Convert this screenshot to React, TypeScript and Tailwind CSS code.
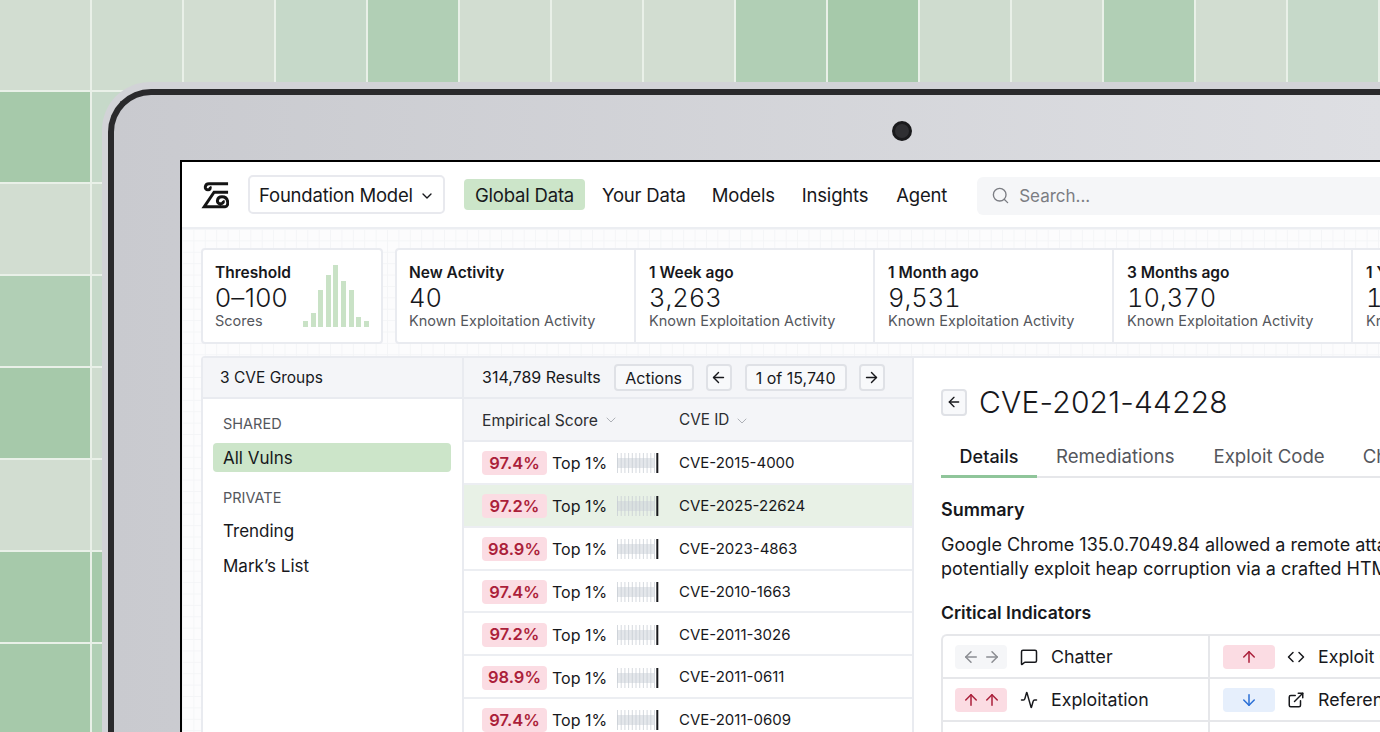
import React from 'react';
import { ArrowDown, ArrowLeft, ArrowRight, ArrowUp, Activity, ChevronDown, Code, ExternalLink, MessageSquare, Search } from 'lucide-react';

const L = 'bg-[#d2ddd1]';
const P = 'bg-[#cfdccf]';
const M = 'bg-[#c6d9c9]';
const G = 'bg-[#b1cfb5]';
const D = 'bg-[#a6c9aa]';

const tiles = [
  [L, P, L, M, G, L, L, L, G, D, P, L, G, L, M],
  [D, M, L, L, L, L, L, L, L, L, L, L, L, L, L],
  [L, P, L, L, L, L, L, L, L, L, L, L, L, L, L],
  [G, M, L, L, L, L, L, L, L, L, L, L, L, L, L],
  [D, P, L, L, L, L, L, L, L, L, L, L, L, L, L],
  [L, P, L, L, L, L, L, L, L, L, L, L, L, L, L],
  [D, D, L, L, L, L, L, L, L, L, L, L, L, L, L],
  [D, G, L, L, L, L, L, L, L, L, L, L, L, L, L],
];

const stats = [
  { title: 'New Activity', value: '40', cell: 'pl-[12px]' },
  { title: '1 Week ago', value: '3,263', cell: 'pl-[13px] border-l-2 border-[#e9ebf0]' },
  { title: '1 Month ago', value: '9,531', cell: 'pl-[13px] border-l-2 border-[#e9ebf0]' },
  { title: '3 Months ago', value: '10,370', cell: 'pl-[13px] border-l-2 border-[#e9ebf0]' },
  { title: '1 Year ago', value: '12,408', cell: 'pl-[13px] border-l-2 border-[#e9ebf0]' },
];

const rows = [
  { score: '97.4%', id: 'CVE-2015-4000' },
  { score: '97.2%', id: 'CVE-2025-22624', active: true },
  { score: '98.9%', id: 'CVE-2023-4863' },
  { score: '97.4%', id: 'CVE-2010-1663' },
  { score: '97.2%', id: 'CVE-2011-3026' },
  { score: '98.9%', id: 'CVE-2011-0611' },
  { score: '97.4%', id: 'CVE-2011-0609' },
];

const bars = [6, 14, 37, 52, 62, 46, 37, 10, 6];

const Logo = () => (
  <svg width="28" height="28" viewBox="0 0 30 30" fill="none" stroke="#141414" strokeWidth="3.200" className="shrink-0">
    <path d="M29 3H8.500C4 3 3 9.500 7.500 9.500c2.200 0 3-2 2-3.500" />
    <path d="M29 12H14L3.500 27.500H26c4 0 4-10.500-3.500-10.500-6 0-6.500 7.500-1.500 7.500 2.500 0 3.500-2 2.500-3.500" />
  </svg>
);

const Spark = () => (
  <svg width="42" height="20" viewBox="0 0 42 20" className="shrink-0">
    <rect x="0" y="5" width="37" height="10" fill="#cdd3da" opacity="0.55" />
    {[0, 3.7, 7.4, 11.1, 14.8, 18.5, 22.2, 25.9, 29.6, 33.3, 37].map((x) => (
      <rect key={x} x={x} y="0" width="1" height="20" fill="#c4cad2" opacity="0.7" />
    ))}
    <rect x="39.300" y="0" width="2" height="20" fill="#17181c" />
  </svg>
);

const SmallButton = ({ children }: { children: React.ReactNode }) => (
  <div className="h-[27px] w-[26px] flex items-center justify-center rounded border-2 border-[#dfe1e6] bg-[#f8f9fb] text-[#17181c]">
    {children}
  </div>
);

const Pill = ({ tone, children }: { tone: string; children: React.ReactNode }) => (
  <div className={`w-[52px] h-[24px] rounded flex items-center justify-center gap-[3px] ${tone}`}>{children}</div>
);

export default function App() {
  return (
    <div className="relative w-[1380px] h-[732px] overflow-hidden bg-[#e9f0e8] font-['Inter',sans-serif] text-[#17181c]">
      <div className="grid grid-cols-[repeat(15,90px)] auto-rows-[90px] gap-[2px]">
        {tiles.flat().map((c, i) => (
          <div key={i} className={c} />
        ))}
      </div>

      {/* Laptop */}
      <div className="absolute left-[102px] top-[82px] w-[1400px] h-[800px] rounded-tl-[48px] bg-[#d2d3d7] pl-[6px] pt-[7px]">
        <div className="relative w-full h-full rounded-tl-[43px] border-l-[6px] border-t-[6px] border-[#2a2a2c] bg-gradient-to-r from-[#c9cacf] to-[#e0e1e5] pl-[66px] pt-[65px]">
          <div className="absolute left-[778px] top-[26px] w-[20px] h-[20px] rounded-full bg-[#2f2f32] border-[3px] border-[#1a1a1c]" />

          {/* Screen */}
          <div className="w-[1300px] h-[700px] border-2 border-black bg-white">
            <header className="h-[67px] flex items-center pl-[19px] border-b-2 border-[#eceef2]">
              <Logo />
              <div className="ml-[19px] w-[197px] h-[39px] flex items-center gap-[6px] pl-[9px] pt-[2px] rounded-[5px] border-2 border-[#e8e9ee] text-[18.500px] tracking-[-0.2px]">
                Foundation Model
                <ChevronDown size={16} strokeWidth={2} />
              </div>
              <nav className="ml-[19px] flex items-center text-[18.500px] tracking-[-0.2px]">
                <span className="w-[121px] h-[31px] pt-[2px] flex items-center justify-center rounded bg-[#cce5c9]">Global Data</span>
                <span className="ml-[17px] pt-[2px]">Your Data</span>
                <span className="ml-[26px] pt-[2px]">Models</span>
                <span className="ml-[27px] pt-[2px]">Insights</span>
                <span className="ml-[28px] pt-[2px]">Agent</span>
              </nav>
              <div className="ml-[30px] mt-[2px] flex-1 h-[38px] flex items-center gap-[9px] pl-[14px] rounded-md bg-[#f5f6f8] text-[#7b7d83] text-[17px]">
                <Search size={19} strokeWidth={1.700} />
                <span className="pt-[2px]">Search...</span>
              </div>
            </header>

            <main className="h-[640px] pt-[19px] pl-[19px] bg-[#fcfcfd] bg-[linear-gradient(#f4f5f7_1px,transparent_1px),linear-gradient(90deg,#f4f5f7_1px,transparent_1px)] bg-[size:11.400px_11.400px]">
              {/* Stat cards */}
              <div className="flex gap-[12px]">
                <div className="w-[182px] h-[96px] shrink-0 flex justify-between rounded border-2 border-[#e9ebf0] bg-white pl-[12px] pr-[12px] pt-[13px]">
                  <div>
                    <div className="text-[15.500px] leading-[20px] font-semibold">Threshold</div>
                    <div className="text-[26px] leading-[30px] -mb-[1px] font-light tracking-[0.3px]">0–100</div>
                    <div className="text-[14.500px] leading-[18px] text-[#55575d]">Scores</div>
                  </div>
                  <div className="flex items-end gap-[2.600px] h-[66px] -mt-[2px] w-[66px]">
                    {bars.map((h, i) => (
                      <div key={i} className="w-[5px] bg-[#c9e2c6]" style={{ height: h }} />
                    ))}
                  </div>
                </div>
                <div className="flex h-[96px] rounded-l border-2 border-[#e9ebf0] bg-white">
                  {stats.map((s, i) => (
                    <div key={s.title} className={`${i ? 'w-[239px]' : 'w-[237px]'} shrink-0 pt-[13px] ${s.cell}`}>
                      <div className="text-[15.500px] leading-[20px] font-semibold">{s.title}</div>
                      <div className="text-[25.500px] leading-[30px] -mb-[1px] font-light tabular-nums">{s.value}</div>
                      <div className="text-[14.500px] leading-[18px] text-[#55575d]">Known Exploitation Activity</div>
                    </div>
                  ))}
                </div>
              </div>

              {/* Panels */}
              <div className="mt-[12px] h-[500px] flex rounded-tl border-2 border-[#e9ebf0] bg-white">
                <aside className="w-[261px] shrink-0 border-r-2 border-[#e9ebf0]">
                  <div className="h-[41px] flex items-center pl-[17px] bg-[#f4f5f8] border-b-2 border-[#e9ebf0] text-[15.500px]">3 CVE Groups</div>
                  <div className="pl-[10px] pr-[11px] pt-[16px]">
                    <div className="pl-[10px] text-[14.500px] leading-[18px] text-[#55575d]">SHARED</div>
                    <div className="mt-[10px] h-[29px] flex items-center pl-[10px] pt-[2px] rounded bg-[#cce5c9] text-[17px]">All Vulns</div>
                    <div className="mt-[17px] pl-[10px] text-[14.500px] leading-[18px] text-[#55575d]">PRIVATE</div>
                    <div className="mt-[13px] pl-[10px] text-[17px] leading-[22px]">Trending</div>
                    <div className="mt-[13px] pl-[10px] text-[17px] leading-[22px]">Mark’s List</div>
                  </div>
                </aside>

                <section className="w-[450px] shrink-0 border-r-2 border-[#e9ebf0]">
                  <div className="h-[41px] flex items-center pl-[18px] bg-[#f4f5f8] border-b-2 border-[#e9ebf0] text-[16px]">
                    <span className="pb-[2px]">314,789 Results</span>
                    <div className="ml-[13px] w-[80px] h-[27px] flex items-center justify-center rounded border-2 border-[#dfe1e6] bg-[#f8f9fb]">Actions</div>
                    <div className="ml-[12px]"><SmallButton><ArrowLeft size={17} /></SmallButton></div>
                    <div className="ml-[13px] w-[102px] h-[27px] flex items-center justify-center rounded border-2 border-[#dfe1e6] bg-[#f8f9fb]">1 of 15,740</div>
                    <div className="ml-[12px]"><SmallButton><ArrowRight size={17} /></SmallButton></div>
                  </div>
                  <div className="h-[43px] flex items-center pl-[18px] pt-[2px] bg-[#f4f5f8] border-b-2 border-[#e9ebf0] text-[15.700px] text-[#2c2d31]">
                    <div className="w-[197px] flex items-center gap-[5px]">Empirical Score <ChevronDown size={16} strokeWidth={1.500} className="text-[#aeb1b7]" /></div>
                    <div className="flex items-center gap-[5px] text-[15.300px]">CVE ID <ChevronDown size={16} strokeWidth={1.500} className="text-[#aeb1b7]" /></div>
                  </div>
                  {rows.map((r) => (
                    <div key={r.id} className={`h-[42.850px] flex items-center pl-[18px] pt-[2px] border-b-2 border-[#eceef2] text-[16px] ${r.active ? 'bg-[#e8f1e6]' : ''}`}>
                      <div className="w-[65px] h-[24px] flex items-center justify-center rounded bg-[#fbdce3] text-[#ab1f3a] text-[16.500px] font-semibold">{r.score}</div>
                      <div className="ml-[5px] w-[65px]">Top 1%</div>
                      <Spark />
                      <div className="ml-[20px] text-[15px]">{r.id}</div>
                    </div>
                  ))}
                </section>

                <section className="flex-1 pl-[27px] pt-[26px]">
                  <div className="flex items-center gap-[12px]">
                    <SmallButton><ArrowLeft size={16} /></SmallButton>
                    <h1 className="text-[30px] leading-[36px] font-light tracking-[0.2px]">CVE-2021-44228</h1>
                  </div>
                  <div className="mt-[17px] w-[500px] h-[41px] flex border-b-2 border-[#e6e7ea] text-[18.600px]">
                    <div className="w-[96px] h-[41px] flex items-center justify-center border-b-[3px] border-[#8fc59a] text-[18px] font-medium">Details</div>
                    <div className="ml-[19px] h-[39px] flex items-center text-[#54565c]">Remediations</div>
                    <div className="ml-[39px] h-[39px] flex items-center text-[#54565c]">Exploit Code</div>
                    <div className="ml-[38px] h-[39px] flex items-center text-[#54565c]">Changes</div>
                  </div>
                  <h2 className="mt-[21px] text-[18px] leading-[22px] font-semibold">Summary</h2>
                  <p className="mt-[12px] w-[700px] text-[18px] leading-[24px]">
                    Google Chrome 135.0.7049.84 allowed a remote attacker to<br />
                    potentially exploit heap corruption via a crafted HTML page
                  </p>
                  <h2 className="mt-[21px] text-[17.600px] leading-[22px] font-semibold">Critical Indicators</h2>
                  <div className="mt-[10px] w-[600px] rounded-tl-md border-t-2 border-l-2 border-[#e6e7ea] text-[17.800px]">
                    <div className="grid grid-cols-[267px_1fr] border-b-2 border-[#e6e7ea] h-[43px]">
                      <div className="flex items-center pl-[12px] border-r-2 border-[#e6e7ea]">
                        <Pill tone="bg-[#f5f6f8] text-[#8b8d92]"><ArrowLeft size={18} /><ArrowRight size={18} /></Pill>
                        <MessageSquare size={18} className="ml-[13px]" />
                        <span className="ml-[13px] pt-[2px]">Chatter</span>
                      </div>
                      <div className="flex items-center pl-[13px]">
                        <Pill tone="bg-[#fbdce3] text-[#ab1f3a]"><ArrowUp size={18} /></Pill>
                        <Code size={18} className="ml-[12px]" />
                        <span className="ml-[13px] pt-[2px]">Exploit Code</span>
                      </div>
                    </div>
                    <div className="grid grid-cols-[267px_1fr] border-b-2 border-[#e6e7ea] h-[43px]">
                      <div className="flex items-center pl-[12px] border-r-2 border-[#e6e7ea]">
                        <Pill tone="bg-[#fbdce3] text-[#ab1f3a]"><ArrowUp size={18} /><ArrowUp size={18} /></Pill>
                        <Activity size={18} className="ml-[13px]" />
                        <span className="ml-[13px] pt-[2px]">Exploitation</span>
                      </div>
                      <div className="flex items-center pl-[13px]">
                        <Pill tone="bg-[#e6effc] text-[#2a6fd6]"><ArrowDown size={18} /></Pill>
                        <ExternalLink size={18} className="ml-[12px]" />
                        <span className="ml-[13px] pt-[2px]">References</span>
                      </div>
                    </div>
                    <div className="grid grid-cols-[267px_1fr] h-[43px]">
                      <div className="flex items-center pl-[12px] border-r-2 border-[#e6e7ea]">
                        <Pill tone="bg-[#f5f6f8]"><span /></Pill>
                      </div>
                      <div className="flex items-center pl-[13px]">
                        <Pill tone="bg-[#f5f6f8]"><span /></Pill>
                      </div>
                    </div>
                  </div>
                </section>
              </div>
            </main>
          </div>
        </div>
      </div>
    </div>
  );
}
